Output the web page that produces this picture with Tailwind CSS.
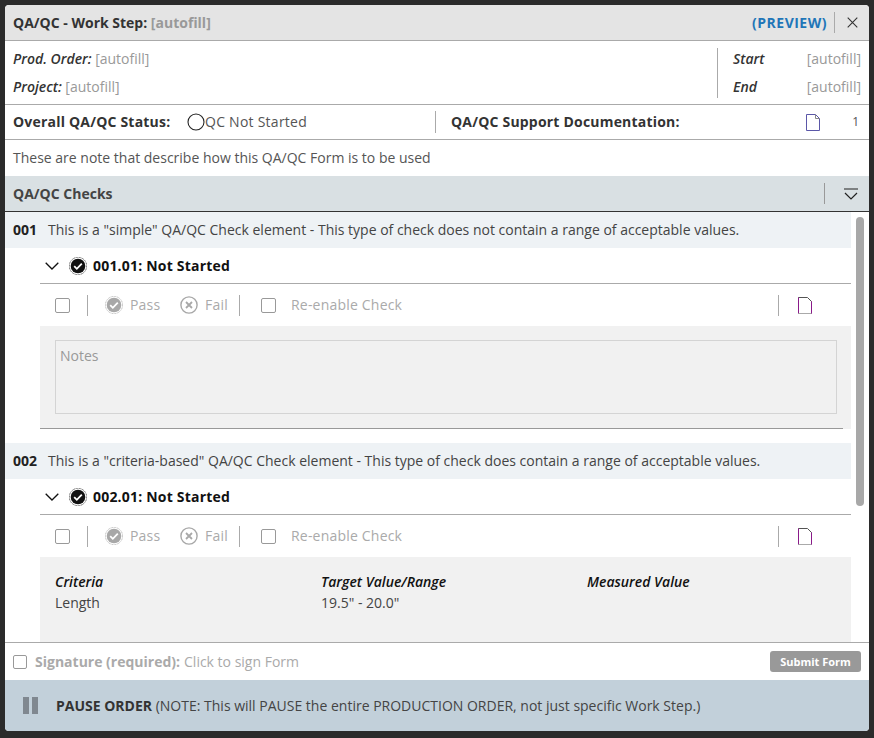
<!DOCTYPE html>
<html>
<head>
<meta charset="utf-8">
<script src="https://cdn.jsdelivr.net/npm/@tailwindcss/browser@4"></script>
</head>
<body class="w-[874px] h-[738px] overflow-hidden bg-[#2b2b2b] font-['Open_Sans',sans-serif] text-[14px] leading-[20px] text-[#444]">
<div class="p-[5px] pb-[7px] h-[738px]">
<div class="w-[864px] h-[726px] rounded-[4px] overflow-hidden bg-white flex flex-col">

  <div class="h-[36px] shrink-0 bg-[#e4e4e4] border-b border-[#aaaaaa] flex items-center pl-[8px] pr-[11px]">
    <span class="font-bold text-[#333]">QA/QC - Work Step: <span class="text-[#999]">[autofill]</span></span>
    <span class="ml-auto font-bold text-[#1f76b8] tracking-[0.5px]">(PREVIEW)</span>
    <span class="w-px h-[21px] bg-[#aaa] ml-[7px] mr-[12px]"></span>
    <svg class="w-[11px] h-[11px]" viewBox="0 0 11 11" fill="none" stroke="#333" stroke-width="1.1"><path d="M.7.7l9.6 9.6M10.3.7L.7 10.3"/></svg>
  </div>

  <div class="h-[64px] shrink-0 border-b border-[#aaaaaa] flex items-center pl-[8px] pr-[8px]">
    <div class="flex flex-col gap-[8px] flex-1">
      <div><i class="font-semibold text-[#333]">Prod. Order:</i> <span class="text-[#999]">[autofill]</span></div>
      <div><i class="font-semibold text-[#333]">Project:</i> <span class="text-[#999]">[autofill]</span></div>
    </div>
    <div class="w-px h-[50px] bg-[#aaa] mr-[15px]"></div>
    <div class="flex flex-col gap-[8px] w-[128px]">
      <div class="flex justify-between"><i class="font-semibold text-[#333]">Start</i><span class="text-[#999]">[autofill]</span></div>
      <div class="flex justify-between"><i class="font-semibold text-[#333]">End</i><span class="text-[#999]">[autofill]</span></div>
    </div>
  </div>

  <div class="h-[35px] shrink-0 border-b border-[#aaaaaa] flex items-center pl-[8px] pr-[10px]">
    <span class="font-bold text-[#333] w-[174px] tracking-[0.2px]">Overall QA/QC Status:</span>
    <svg class="w-[18px] h-[18px]" viewBox="0 0 18 18" fill="none" stroke="#222" stroke-width="1.1"><circle cx="9" cy="9" r="8"/></svg>
    <span class="w-[230px] text-[#555] tracking-[0.25px]">QC Not Started</span>
    <span class="w-px h-[22px] bg-[#aaa] mr-[15px]"></span>
    <span class="font-bold text-[#333] tracking-[0.2px]">QA/QC Support Documentation:</span>
    <svg class="w-[14px] h-[17px] ml-auto mr-[32px]" viewBox="0 0 14 17" fill="none"><path d="M.5.5h9l4 4v12h-13z" stroke="#5b57a8"/><path d="M9.5.5v4h4" stroke="#888"/></svg>
    <span class="text-[12px] text-[#555]">1</span>
  </div>

  <div class="h-[36px] shrink-0 flex items-center pl-[8px] text-[#555]">These are note that describe how this QA/QC Form is to be used</div>

  <div class="h-[36px] shrink-0 bg-[#d9e0e3] border-b border-[#333] flex items-center pl-[8px] pr-[11px]">
    <span class="font-bold text-[#444]">QA/QC Checks</span>
    <span class="ml-auto w-px h-[21px] bg-[#999] mr-[19px]"></span>
    <svg class="w-[14px] h-[12px]" viewBox="0 0 14 12" fill="none" stroke="#222" stroke-width="1.2"><path d="M0 1h14M1 5l6 6 6-6"/></svg>
  </div>

  <div class="flex-1 min-h-0 overflow-hidden relative">
    <div class="absolute right-[5px] top-[5px] w-[8px] h-[289px] rounded-full bg-[#a8a8a8]"></div>

    <div class="w-[846px]">
      <div class="h-[36px] bg-[#eef2f5] flex items-center pl-[8px]"><b class="text-[#222] w-[35px]">001</b><span class="text-[#444]">This is a "simple" QA/QC Check element - This type of check does not contain a range of acceptable values.</span></div>
      <div class="ml-[35px]">
        <div class="h-[36px] flex items-center pl-[5px] border-b border-[#aaa]">
          <svg class="w-[14px] h-[8px] mr-[10px]" viewBox="0 0 14 8" fill="none" stroke="#111" stroke-width="1.3"><path d="M.7.7L7 7l6.3-6.3"/></svg>
          <svg class="w-[18px] h-[18px] mr-[6px]" viewBox="0 0 18 18"><circle cx="9" cy="9" r="8.7" fill="none" stroke="#111" stroke-width=".7" stroke-dasharray="1 .6"/><circle cx="9" cy="9" r="7.3" fill="#111"/><path d="M5.2 9.2l2.6 2.6 5-5.2" fill="none" stroke="#fff" stroke-width="1.8"/></svg>
          <b class="text-[#111] tracking-[0.2px]">001.01: Not Started</b>
        </div>
        <div class="h-[42px] flex items-center pl-[15px]">
          <span class="w-[15px] h-[15px] border border-[#999] rounded-[2px] bg-white"></span>
          <span class="w-px h-[21px] bg-[#aaa] ml-[17px] mr-[17px]"></span>
          <svg class="w-[18px] h-[18px] mr-[7px]" viewBox="0 0 18 18"><circle cx="9" cy="9" r="8.6" fill="none" stroke="#a8a8a8" stroke-width=".8" stroke-dasharray="1 .6"/><circle cx="9" cy="9" r="7.3" fill="#a8a8a8"/><path d="M5.2 9.2l2.6 2.6 5-5.2" fill="none" stroke="#fff" stroke-width="1.8"/></svg>
          <span class="text-[#aaa] tracking-[0.2px] w-[50px]">Pass</span>
          <svg class="w-[18px] h-[18px] mr-[7px]" viewBox="0 0 18 18" fill="none" stroke="#a8a8a8"><circle cx="9" cy="9" r="8.1" stroke-width="1.4"/><path d="M6 6l6 6M12 6l-6 6" stroke-width="1.8"/></svg>
          <span class="text-[#aaa] tracking-[0.2px] w-[34px]">Fail</span>
          <span class="w-px h-[21px] bg-[#aaa] mr-[21px]"></span>
          <span class="w-[15px] h-[15px] border border-[#999] rounded-[2px] bg-white mr-[15px]"></span>
          <span class="text-[#aaa] tracking-[0.2px]">Re-enable Check</span>
          <span class="ml-auto w-px h-[21px] bg-[#aaa] mr-[19px]"></span>
          <svg class="w-[14px] h-[17px] mr-[39px]" viewBox="0 0 14 17" fill="none"><path d="M.5 16.5V.5h9l4 4v12" stroke="#555"/><path d="M.5.5v16" stroke="#8a1a8a"/><path d="M.5 16.5h13" stroke="#aaa"/><path d="M13.5 4.5v12" stroke="#8a1a8a"/></svg>
        </div>
        <div class="h-[103px] bg-[#f1f1f1] pt-[14px] pl-[15px] pr-[14px] relative">
          <div class="h-[74px] border border-[#d4d4d4] pl-[4px] pt-[5px] text-[#999]">Notes</div>
          <div class="absolute left-0 right-[8px] bottom-0 h-px bg-[#999]"></div>
        </div>
      </div>

      <div class="h-[36px] mt-[14px] bg-[#eef2f5] flex items-center pl-[8px]"><b class="text-[#222] w-[35px]">002</b><span class="text-[#444]">This is a "criteria-based" QA/QC Check element - This type of check does contain a range of acceptable values.</span></div>
      <div class="ml-[35px]">
        <div class="h-[36px] flex items-center pl-[5px] border-b border-[#aaa]">
          <svg class="w-[14px] h-[8px] mr-[10px]" viewBox="0 0 14 8" fill="none" stroke="#111" stroke-width="1.3"><path d="M.7.7L7 7l6.3-6.3"/></svg>
          <svg class="w-[18px] h-[18px] mr-[6px]" viewBox="0 0 18 18"><circle cx="9" cy="9" r="8.7" fill="none" stroke="#111" stroke-width=".7" stroke-dasharray="1 .6"/><circle cx="9" cy="9" r="7.3" fill="#111"/><path d="M5.2 9.2l2.6 2.6 5-5.2" fill="none" stroke="#fff" stroke-width="1.8"/></svg>
          <b class="text-[#111] tracking-[0.2px]">002.01: Not Started</b>
        </div>
        <div class="h-[42px] flex items-center pl-[15px]">
          <span class="w-[15px] h-[15px] border border-[#999] rounded-[2px] bg-white"></span>
          <span class="w-px h-[21px] bg-[#aaa] ml-[17px] mr-[17px]"></span>
          <svg class="w-[18px] h-[18px] mr-[7px]" viewBox="0 0 18 18"><circle cx="9" cy="9" r="8.6" fill="none" stroke="#a8a8a8" stroke-width=".8" stroke-dasharray="1 .6"/><circle cx="9" cy="9" r="7.3" fill="#a8a8a8"/><path d="M5.2 9.2l2.6 2.6 5-5.2" fill="none" stroke="#fff" stroke-width="1.8"/></svg>
          <span class="text-[#aaa] tracking-[0.2px] w-[50px]">Pass</span>
          <svg class="w-[18px] h-[18px] mr-[7px]" viewBox="0 0 18 18" fill="none" stroke="#a8a8a8"><circle cx="9" cy="9" r="8.1" stroke-width="1.4"/><path d="M6 6l6 6M12 6l-6 6" stroke-width="1.8"/></svg>
          <span class="text-[#aaa] tracking-[0.2px] w-[34px]">Fail</span>
          <span class="w-px h-[21px] bg-[#aaa] mr-[21px]"></span>
          <span class="w-[15px] h-[15px] border border-[#999] rounded-[2px] bg-white mr-[15px]"></span>
          <span class="text-[#aaa] tracking-[0.2px]">Re-enable Check</span>
          <span class="ml-auto w-px h-[21px] bg-[#aaa] mr-[19px]"></span>
          <svg class="w-[14px] h-[17px] mr-[39px]" viewBox="0 0 14 17" fill="none"><path d="M.5 16.5V.5h9l4 4v12" stroke="#555"/><path d="M.5.5v16" stroke="#8a1a8a"/><path d="M.5 16.5h13" stroke="#aaa"/><path d="M13.5 4.5v12" stroke="#8a1a8a"/></svg>
        </div>
        <div class="h-[120px] bg-[#f1f1f1] pt-[15px] pl-[15px] grid grid-cols-[266px_266px_1fr] content-start gap-y-[1px]">
          <i class="font-semibold text-[#111]">Criteria</i><i class="font-semibold text-[#111]">Target Value/Range</i><i class="font-semibold text-[#111]">Measured Value</i>
          <span class="text-[#444]">Length</span><span class="text-[#444]">19.5" - 20.0"</span><span></span>
        </div>
      </div>
    </div>
  </div>

  <div class="h-[38px] shrink-0 border-t border-[#aaa] flex items-center pl-[8px] pr-[8px]">
    <span class="w-[14px] h-[14px] border border-[#999] rounded-[2px] mr-[8px]"></span>
    <b class="text-[#aaa]">Signature (required):</b><span class="text-[#aaa] ml-[4px]">Click to sign Form</span>
    <span class="ml-auto w-[91px] h-[21px] rounded-[3px] bg-[#999] text-white text-[11px] font-bold flex items-center justify-center">Submit Form</span>
  </div>

  <div class="h-[51px] shrink-0 bg-[#c2d0da] flex items-center pl-[18px]">
    <svg class="w-[15px] h-[17px] mr-[18px]" viewBox="0 0 15 17" fill="#808890"><rect width="6" height="17"/><rect x="9" width="6" height="17"/></svg>
    <span class="text-[#444]"><b class="text-[#333]">PAUSE ORDER</b> (NOTE: This will PAUSE the entire PRODUCTION ORDER, not just specific Work Step.)</span>
  </div>

</div>
</div>
</body>
</html>
